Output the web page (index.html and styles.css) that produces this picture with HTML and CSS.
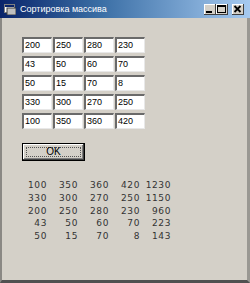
FILE: index.html
```html
<!DOCTYPE html>
<html>
<head>
<meta charset="utf-8">
<link rel="stylesheet" href="styles.css">
</head>
<body>
<div class="window">
  <div class="titlebar">
    <svg class="app-icon" width="12" height="11" viewBox="0 0 12 11">
      <rect x="0.5" y="0.5" width="10" height="8" fill="#ffffff" stroke="#808080"/>
      <rect x="1" y="1" width="9" height="2" fill="#0a246a"/>
      <rect x="3" y="4" width="9" height="7" fill="#c0c0c0" stroke="#404040" stroke-width="1"/>
    </svg>
    <span class="title">Сортировка массива</span>
    <div class="caption-buttons">
      <div class="cbtn"><svg width="12" height="11" viewBox="0 0 12 11"><rect x="2" y="7" width="6" height="2" fill="#000"/></svg></div>
      <div class="cbtn"><svg width="12" height="11" viewBox="0 0 12 11"><rect x="1.5" y="1.5" width="8" height="7" fill="none" stroke="#000"/><rect x="1" y="1" width="9" height="2" fill="#000"/></svg></div>
      <div class="cbtn close"><svg width="12" height="11" viewBox="0 0 12 11"><path d="M2.5 2 L8.5 8 M8.5 2 L2.5 8" stroke="#000" stroke-width="1.8"/></svg></div>
    </div>
  </div>
  <div class="client">
    <div class="inputs">
      <div class="tb">200</div><div class="tb">250</div><div class="tb">280</div><div class="tb">230</div>
      <div class="tb">43</div><div class="tb">50</div><div class="tb">60</div><div class="tb">70</div>
      <div class="tb">50</div><div class="tb">15</div><div class="tb">70</div><div class="tb">8</div>
      <div class="tb">330</div><div class="tb">300</div><div class="tb">270</div><div class="tb">250</div>
      <div class="tb">100</div><div class="tb">350</div><div class="tb">360</div><div class="tb">420</div>
    </div>
    <div class="ok"><div class="ok-inner"><span class="ok-focus">OK</span></div></div>
    <div class="output">
      <span>100</span><span>350</span><span>360</span><span>420</span><span>1230</span>
      <span>330</span><span>300</span><span>270</span><span>250</span><span>1150</span>
      <span>200</span><span>250</span><span>280</span><span>230</span><span>960</span>
      <span>43</span><span>50</span><span>60</span><span>70</span><span>223</span>
      <span>50</span><span>15</span><span>70</span><span>8</span><span>143</span>
    </div>
  </div>
</div>
</body>
</html>
```

FILE: styles.css
```css
html, body {
  margin: 0;
  padding: 0;
  background: #d4d0c8;
}
.window {
  width: 250px;
  height: 283px;
  display: flex;
  flex-direction: column;
  overflow: hidden;
}
.titlebar {
  height: 18px;
  flex: none;
  display: flex;
  align-items: center;
  background: linear-gradient(to right, #0a246a 0%, #3a6ea5 40%, #a6caf0 100%);
  padding-left: 4px;
  box-sizing: border-box;
}
.app-icon {
  flex: none;
  margin-top: 1px;
}
.title {
  margin-left: 4px;
  color: #ffffff;
  font-family: "Liberation Sans", Arial, sans-serif;
  font-size: 9px;
  white-space: nowrap;
  flex: 1;
}
.caption-buttons {
  display: flex;
  align-items: center;
  margin-right: 6px;
}
.cbtn {
  width: 12px;
  height: 11px;
  background: #d4d0c8;
  box-shadow: inset -1px -1px #404040, inset 1px 1px #ffffff;
  display: flex;
}
.cbtn.close {
  margin-left: 4px;
}
.client {
  flex: 1;
  border-left: 2px solid #8a8884;
  border-right: 3px solid #9a9893;
  border-bottom: 3px solid #505050;
  padding-left: 20px;
  display: flex;
  flex-direction: column;
  align-items: flex-start;
}
.inputs {
  margin-top: 19px;
  display: grid;
  grid-template-columns: repeat(4, 30px);
  grid-auto-rows: 16px;
  column-gap: 1px;
  row-gap: 3px;
}
.tb {
  box-sizing: border-box;
  background: #ffffff;
  border-top: 2px solid #6a6a6a;
  border-left: 2px solid #6a6a6a;
  border-right: 1px solid #e8e8e8;
  border-bottom: 1px solid #e8e8e8;
  font-family: "Liberation Sans", Arial, sans-serif;
  font-size: 9px;
  line-height: 13px;
  padding-left: 1px;
  color: #000;
}
.ok {
  margin-top: 14px;
  width: 63px;
  height: 18px;
  box-sizing: border-box;
  border: 1px solid #000;
  display: flex;
}
.ok-inner {
  flex: 1;
  box-shadow: inset -1px -1px #404040, inset 1px 1px #ffffff, inset -2px -2px #808080;
  display: flex;
  padding: 3px;
}
.ok-focus {
  flex: 1;
  border: 1px dotted #555;
  font-family: "Liberation Sans", Arial, sans-serif;
  font-size: 10px;
  line-height: 8px;
  text-align: center;
  color: #000;
}
.output {
  margin-top: 18px;
  margin-left: -6px;
  display: grid;
  grid-template-columns: repeat(5, 31px);
  font-family: "DejaVu Sans", Verdana, sans-serif;
  font-size: 9px;
  line-height: 12.75px;
  letter-spacing: 0.6px;
  color: #333;
}
.output span {
  text-align: right;
}
```
